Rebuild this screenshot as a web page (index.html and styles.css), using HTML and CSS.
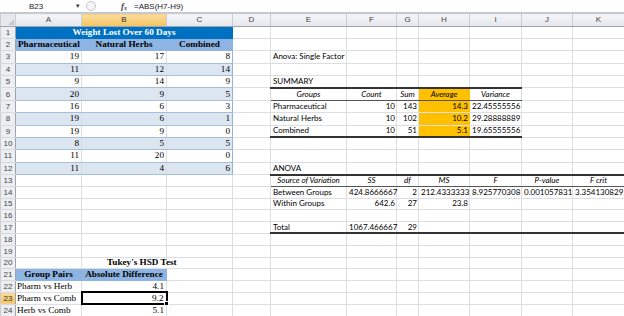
FILE: index.html
```html
<!DOCTYPE html>
<html>

<head>
    <title>Weight Lost Over 60 Days - Anova</title>
    <link rel="stylesheet" href="styles.css">
</head>

<body>
    <div class="formula-bar">
        <span class="name-box">B23</span>
        <span class="name-arrow">&#9662;</span>
        <span class="bar-knob"></span>
        <span class="fx">f<sub>x</sub></span>
        <span class="formula">=ABS(H7-H9)</span>
    </div>

    <table class="sheet">
        <colgroup>
            <col class="w-row">
            <col class="w-a">
            <col class="w-b">
            <col class="w-c">
            <col class="w-d">
            <col class="w-e">
            <col class="w-f">
            <col class="w-g">
            <col class="w-h">
            <col class="w-i">
            <col class="w-j">
            <col class="w-k">
        </colgroup>
        <thead>
            <tr>
                <th class="corner"></th>
                <th>A</th>
                <th class="sel">B</th>
                <th>C</th>
                <th>D</th>
                <th>E</th>
                <th>F</th>
                <th>G</th>
                <th>H</th>
                <th>I</th>
                <th>J</th>
                <th>K</th>
            </tr>
        </thead>
        <tbody>
            <tr>
                <th>1</th>
                <td colspan="3" class="title">Weight Lost Over 60 Days</td>
                <td></td><td></td><td></td><td></td><td></td><td></td><td></td><td></td>
            </tr>
            <tr>
                <th>2</th>
                <td class="hdr">Pharmaceutical</td>
                <td class="hdr">Natural Herbs</td>
                <td class="hdr">Combined</td>
                <td></td><td></td><td></td><td></td><td></td><td></td><td></td><td></td>
            </tr>
            <tr>
                <th>3</th>
                <td class="n">19</td><td class="n">17</td><td class="n last">8</td>
                <td></td>
                <td class="txt">Anova: Single Factor</td>
                <td></td><td></td><td></td><td></td><td></td><td></td>
            </tr>
            <tr class="band">
                <th>4</th>
                <td class="n">11</td><td class="n">12</td><td class="n last">14</td>
                <td></td><td></td><td></td><td></td><td></td><td></td><td></td><td></td>
            </tr>
            <tr>
                <th>5</th>
                <td class="n">9</td><td class="n">14</td><td class="n last">9</td>
                <td></td>
                <td class="txt">SUMMARY</td>
                <td></td><td></td><td></td><td></td><td></td><td></td>
            </tr>
            <tr class="band">
                <th>6</th>
                <td class="n">20</td><td class="n">9</td><td class="n last">5</td>
                <td></td>
                <td class="head top">Groups</td>
                <td class="head top">Count</td>
                <td class="head top">Sum</td>
                <td class="head top avg">Average</td>
                <td class="head top">Variance</td>
                <td></td><td></td>
            </tr>
            <tr>
                <th>7</th>
                <td class="n">16</td><td class="n">6</td><td class="n last">3</td>
                <td></td>
                <td class="txt">Pharmaceutical</td>
                <td class="val">10</td>
                <td class="val">143</td>
                <td class="val avg">14.3</td>
                <td class="val">22.45555556</td>
                <td></td><td></td>
            </tr>
            <tr class="band">
                <th>8</th>
                <td class="n">19</td><td class="n">6</td><td class="n last">1</td>
                <td></td>
                <td class="txt">Natural Herbs</td>
                <td class="val">10</td>
                <td class="val">102</td>
                <td class="val avg">10.2</td>
                <td class="val">29.28888889</td>
                <td></td><td></td>
            </tr>
            <tr>
                <th>9</th>
                <td class="n">19</td><td class="n">9</td><td class="n last">0</td>
                <td></td>
                <td class="txt bottom">Combined</td>
                <td class="val bottom">10</td>
                <td class="val bottom">51</td>
                <td class="val avg bottom">5.1</td>
                <td class="val bottom">19.65555556</td>
                <td></td><td></td>
            </tr>
            <tr class="band">
                <th>10</th>
                <td class="n">8</td><td class="n">5</td><td class="n last">5</td>
                <td></td><td></td><td></td><td></td><td></td><td></td><td></td><td></td>
            </tr>
            <tr>
                <th>11</th>
                <td class="n">11</td><td class="n">20</td><td class="n last">0</td>
                <td></td><td></td><td></td><td></td><td></td><td></td><td></td><td></td>
            </tr>
            <tr class="band">
                <th>12</th>
                <td class="n">11</td><td class="n">4</td><td class="n last">6</td>
                <td></td>
                <td class="txt">ANOVA</td>
                <td></td><td></td><td></td><td></td><td></td><td></td>
            </tr>
            <tr class="lo">
                <th>13</th>
                <td></td><td></td><td></td><td></td>
                <td class="head top">Source of Variation</td>
                <td class="head top">SS</td>
                <td class="head top">df</td>
                <td class="head top">MS</td>
                <td class="head top">F</td>
                <td class="head top">P-value</td>
                <td class="head top">F crit</td>
            </tr>
            <tr class="lo">
                <th>14</th>
                <td></td><td></td><td></td><td></td>
                <td class="txt">Between Groups</td>
                <td class="val">424.8666667</td>
                <td class="val">2</td>
                <td class="val">212.4333333</td>
                <td class="val">8.925770308</td>
                <td class="val">0.001057831</td>
                <td class="val">3.354130829</td>
            </tr>
            <tr class="lo">
                <th>15</th>
                <td></td><td></td><td></td><td></td>
                <td class="txt">Within Groups</td>
                <td class="val">642.6</td>
                <td class="val">27</td>
                <td class="val">23.8</td>
                <td></td><td></td><td></td>
            </tr>
            <tr class="lo">
                <th>16</th>
                <td></td><td></td><td></td><td></td><td></td><td></td><td></td><td></td><td></td><td></td><td></td>
            </tr>
            <tr class="lo">
                <th>17</th>
                <td></td><td></td><td></td><td></td>
                <td class="txt bottom">Total</td>
                <td class="val bottom">1067.466667</td>
                <td class="val bottom">29</td>
                <td class="bottom"></td><td class="bottom"></td><td class="bottom"></td><td class="bottom"></td>
            </tr>
            <tr class="lo">
                <th>18</th>
                <td></td><td></td><td></td><td></td><td></td><td></td><td></td><td></td><td></td><td></td><td></td>
            </tr>
            <tr class="lo">
                <th>19</th>
                <td></td><td></td><td></td><td></td><td></td><td></td><td></td><td></td><td></td><td></td><td></td>
            </tr>
            <tr class="lo">
                <th>20</th>
                <td></td>
                <td colspan="2" class="tukey">Tukey's HSD Test</td>
                <td></td><td></td><td></td><td></td><td></td><td></td><td></td><td></td>
            </tr>
            <tr class="lo">
                <th>21</th>
                <td class="hdr">Group Pairs</td>
                <td class="hdr">Absolute Difference</td>
                <td></td><td></td><td></td><td></td><td></td><td></td><td></td><td></td><td></td>
            </tr>
            <tr class="lo">
                <th>22</th>
                <td class="pair">Pharm vs Herb</td>
                <td class="n">4.1</td>
                <td></td><td></td><td></td><td></td><td></td><td></td><td></td><td></td><td></td>
            </tr>
            <tr class="lo">
                <th class="sel">23</th>
                <td class="pair">Pharm vs Comb</td>
                <td class="n active">9.2</td>
                <td></td><td></td><td></td><td></td><td></td><td></td><td></td><td></td><td></td>
            </tr>
            <tr class="lo">
                <th>24</th>
                <td class="pair">Herb vs Comb</td>
                <td class="n">5.1</td>
                <td></td><td></td><td></td><td></td><td></td><td></td><td></td><td></td><td></td>
            </tr>
        </tbody>
    </table>
</body>

</html>
```

FILE: styles.css
```css
body {
    margin: 0;
    overflow: hidden;
    background: #fff;
    font-family: "Liberation Sans", Arial, sans-serif;
    color: #000;
}

/* formula bar */
.formula-bar {
    display: flex;
    align-items: center;
    height: 12px;
    border-bottom: 1px solid #c3c7cd;
    font-size: 8px;
    color: #222;
}

.name-box {
    margin-left: 29px;
    width: 47px;
}

.name-arrow {
    width: 8px;
    font-size: 7px;
    color: #333;
}

.bar-knob {
    width: 8px;
    height: 8px;
    margin-left: 2px;
    border: 1px solid #c8c8c8;
    border-radius: 50%;
    background: #f4f4f4;
}

.fx {
    margin-left: 25px;
    font-family: "Liberation Serif", serif;
    font-style: italic;
    font-weight: bold;
    font-size: 9px;
    color: #444;
}

.fx sub {
    font-size: 6px;
    vertical-align: -1px;
}

.formula {
    margin-left: 7px;
}

/* grid */
.sheet {
    table-layout: fixed;
    width: 624px;
    border-collapse: collapse;
}

.w-row { width: 15px; }
.w-a { width: 66px; }
.w-b { width: 85px; }
.w-c { width: 66px; }
.w-d { width: 38px; }
.w-e { width: 76px; }
.w-f { width: 50px; }
.w-g { width: 22px; }
.w-h { width: 51px; }
.w-i { width: 52px; }
.w-j { width: 51px; }
.w-k { width: 52px; }

.sheet thead tr {
    height: 12.5px;
}

.sheet tbody tr {
    height: 12.375px;
}

.sheet tbody tr.lo {
    height: 11.8px;
}

.sheet th {
    padding: 0;
    font-weight: normal;
    font-size: 8px;
    line-height: 9px;
    color: #444;
    background: #eceef2;
    border: 1px solid #c9cdd3;
    text-align: center;
}

.sheet thead th {
    background: linear-gradient(#f5f6f8, #e3e6eb);
    border-bottom-color: #9ea4ad;
}

.sheet tbody th {
    border-right-color: #9ea4ad;
    border-top-color: #d6dae0;
    border-bottom-color: #d6dae0;
}

.sheet th.sel {
    background: linear-gradient(#fbdd9f, #f3c35f);
    color: #333;
}

.sheet th.corner {
    position: relative;
    background: #e6e8ec;
}

.sheet th.corner::after {
    content: "";
    position: absolute;
    right: 1px;
    bottom: 1px;
    border-left: 6px solid transparent;
    border-bottom: 6px solid #c4c8ce;
}

.sheet td {
    padding: 0 2px;
    border: 1px solid #dcdee1;
    font-family: "Lato", "Liberation Sans", sans-serif;
    font-size: 8px;
    line-height: 9px;
    white-space: nowrap;
    overflow: visible;
}

/* weight lost table */
.sheet td.title {
    background: #0070c0;
    border-color: #0070c0;
    color: #fff;
    font-family: "Liberation Serif", serif;
    font-weight: bold;
    font-size: 9.2px;
    text-align: center;
}

.sheet td.hdr {
    background: #8db4e2;
    border-color: #8db4e2;
    font-family: "Liberation Serif", serif;
    font-weight: bold;
    font-size: 9.2px;
    text-align: center;
}

.sheet td.n {
    font-family: "Liberation Serif", serif;
    font-size: 9.2px;
    text-align: right;
    border-top-color: #a7bfdd;
    border-bottom-color: #a7bfdd;
}

.sheet td.n.last {
    border-right-color: #95b3d7;
}

.band td.n {
    background: #dce6f1;
}

.sheet td.pair {
    font-family: "Liberation Serif", serif;
    font-size: 9.2px;
    padding-left: 1px;
}

.sheet td.tukey {
    font-family: "Liberation Serif", serif;
    font-weight: bold;
    font-size: 9.2px;
    padding-left: 25px;
}

.sheet td.active {
    position: relative;
    border: 2px solid #000;
}

.sheet td.active::after {
    content: "";
    position: absolute;
    right: -3px;
    bottom: -3px;
    width: 3px;
    height: 3px;
    background: #000;
    border: 1px solid #fff;
}

/* anova output */
.sheet td.txt {
    padding-left: 2px;
}

.sheet td.head {
    font-style: italic;
    text-align: center;
}

.sheet td.val {
    text-align: right;
    padding-right: 1px;
}

.sheet td.top {
    border-top: 2px solid #333;
    border-bottom: 1px solid #555;
}

.sheet td.bottom {
    border-bottom: 2px solid #333;
}

.sheet td.avg {
    background: #ffc000;
    border-left-color: #ffc000;
    border-right-color: #ffc000;
}
```
